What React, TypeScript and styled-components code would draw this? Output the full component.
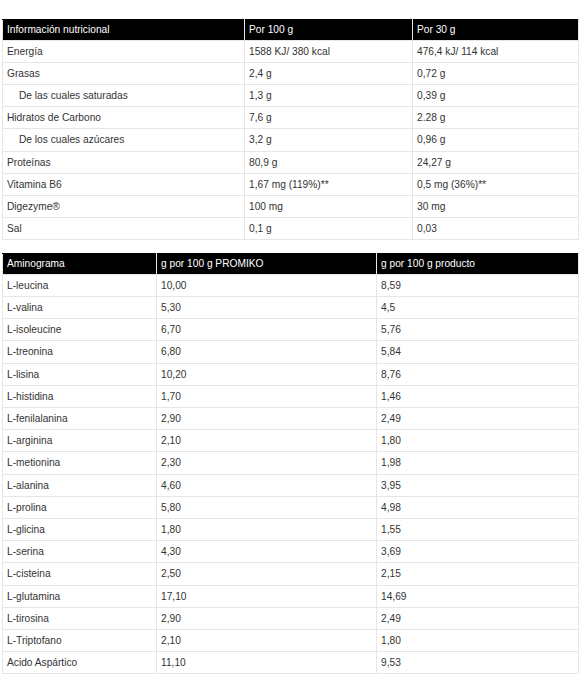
import React from 'react';
import styled, { createGlobalStyle } from 'styled-components';

const GlobalStyle = createGlobalStyle`
  html, body {
    margin: 0;
    padding: 0;
    background: #fff;
  }
  body {
    font-family: "Liberation Sans", Arial, sans-serif;
  }
`;

const Page = styled.div`
  padding: 19px 3px 0 2px;
  display: flex;
  flex-direction: column;
  gap: 13px;
`;

const Table = styled.table`
  width: 576px;
  border-collapse: collapse;
  table-layout: fixed;
  font-size: 10.2px;
  line-height: 13.2px;
  color: #333;
  border: 1px solid #e6e6e6;
`;

const HeadCell = styled.th`
  background: #000;
  color: #fff;
  font-weight: normal;
  text-align: left;
  padding: 3px 4px 3.3px;
  border: 1px solid #e6e6e6;
  border-top-color: #000;
`;

const Cell = styled.td<{ $indent?: boolean }>`
  padding: 4px 4px 4px ${(p) => (p.$indent ? '16px' : '4px')};
  border: 1px solid #e6e6e6;
  white-space: nowrap;
`;

interface Row {
  label: string;
  a: string;
  b: string;
  indent?: boolean;
}

const nutrition: Row[] = [
  { label: 'Energía', a: '1588 KJ/ 380 kcal', b: '476,4 kJ/ 114 kcal' },
  { label: 'Grasas', a: '2,4 g', b: '0,72 g' },
  { label: 'De las cuales saturadas', a: '1,3 g', b: '0,39 g', indent: true },
  { label: 'Hidratos de Carbono', a: '7,6 g', b: '2.28 g' },
  { label: 'De los cuales azúcares', a: '3,2 g', b: '0,96 g', indent: true },
  { label: 'Proteínas', a: '80,9 g', b: '24,27 g' },
  { label: 'Vitamina B6', a: '1,67 mg (119%)**', b: '0,5 mg (36%)**' },
  { label: 'Digezyme®', a: '100 mg', b: '30 mg' },
  { label: 'Sal', a: '0,1 g', b: '0,03' },
];

const amino: Row[] = [
  { label: 'L-leucina', a: '10,00', b: '8,59' },
  { label: 'L-valina', a: '5,30', b: '4,5' },
  { label: 'L-isoleucine', a: '6,70', b: '5,76' },
  { label: 'L-treonina', a: '6,80', b: '5,84' },
  { label: 'L-lisina', a: '10,20', b: '8,76' },
  { label: 'L-histidina', a: '1,70', b: '1,46' },
  { label: 'L-fenilalanina', a: '2,90', b: '2,49' },
  { label: 'L-arginina', a: '2,10', b: '1,80' },
  { label: 'L-metionina', a: '2,30', b: '1,98' },
  { label: 'L-alanina', a: '4,60', b: '3,95' },
  { label: 'L-prolina', a: '5,80', b: '4,98' },
  { label: 'L-glicina', a: '1,80', b: '1,55' },
  { label: 'L-serina', a: '4,30', b: '3,69' },
  { label: 'L-cisteina', a: '2,50', b: '2,15' },
  { label: 'L-glutamina', a: '17,10', b: '14,69' },
  { label: 'L-tirosina', a: '2,90', b: '2,49' },
  { label: 'L-Triptofano', a: '2,10', b: '1,80' },
  { label: 'Acido Aspártico', a: '11,10', b: '9,53' },
];

interface TableProps {
  heads: [string, string, string];
  widths: [number, number, number];
  rows: Row[];
}

const DataTable = ({ heads, widths, rows }: TableProps): React.ReactElement => (
  <Table>
    <colgroup>
      {widths.map((w, i) => (
        <col key={i} style={{ width: w }} />
      ))}
    </colgroup>
    <thead>
      <tr>
        {heads.map((h) => (
          <HeadCell key={h}>{h}</HeadCell>
        ))}
      </tr>
    </thead>
    <tbody>
      {rows.map((r) => (
        <tr key={r.label}>
          <Cell $indent={r.indent}>{r.label}</Cell>
          <Cell>{r.a}</Cell>
          <Cell>{r.b}</Cell>
        </tr>
      ))}
    </tbody>
  </Table>
);

const App = (): React.ReactElement => (
  <>
    <GlobalStyle />
    <Page>
      <DataTable
        heads={['Información nutricional', 'Por 100 g', 'Por 30 g']}
        widths={[242, 168, 166]}
        rows={nutrition}
      />
      <DataTable
        heads={['Aminograma', 'g por 100 g PROMIKO', 'g por 100 g producto']}
        widths={[154, 220, 202]}
        rows={amino}
      />
    </Page>
  </>
);

export default App;
